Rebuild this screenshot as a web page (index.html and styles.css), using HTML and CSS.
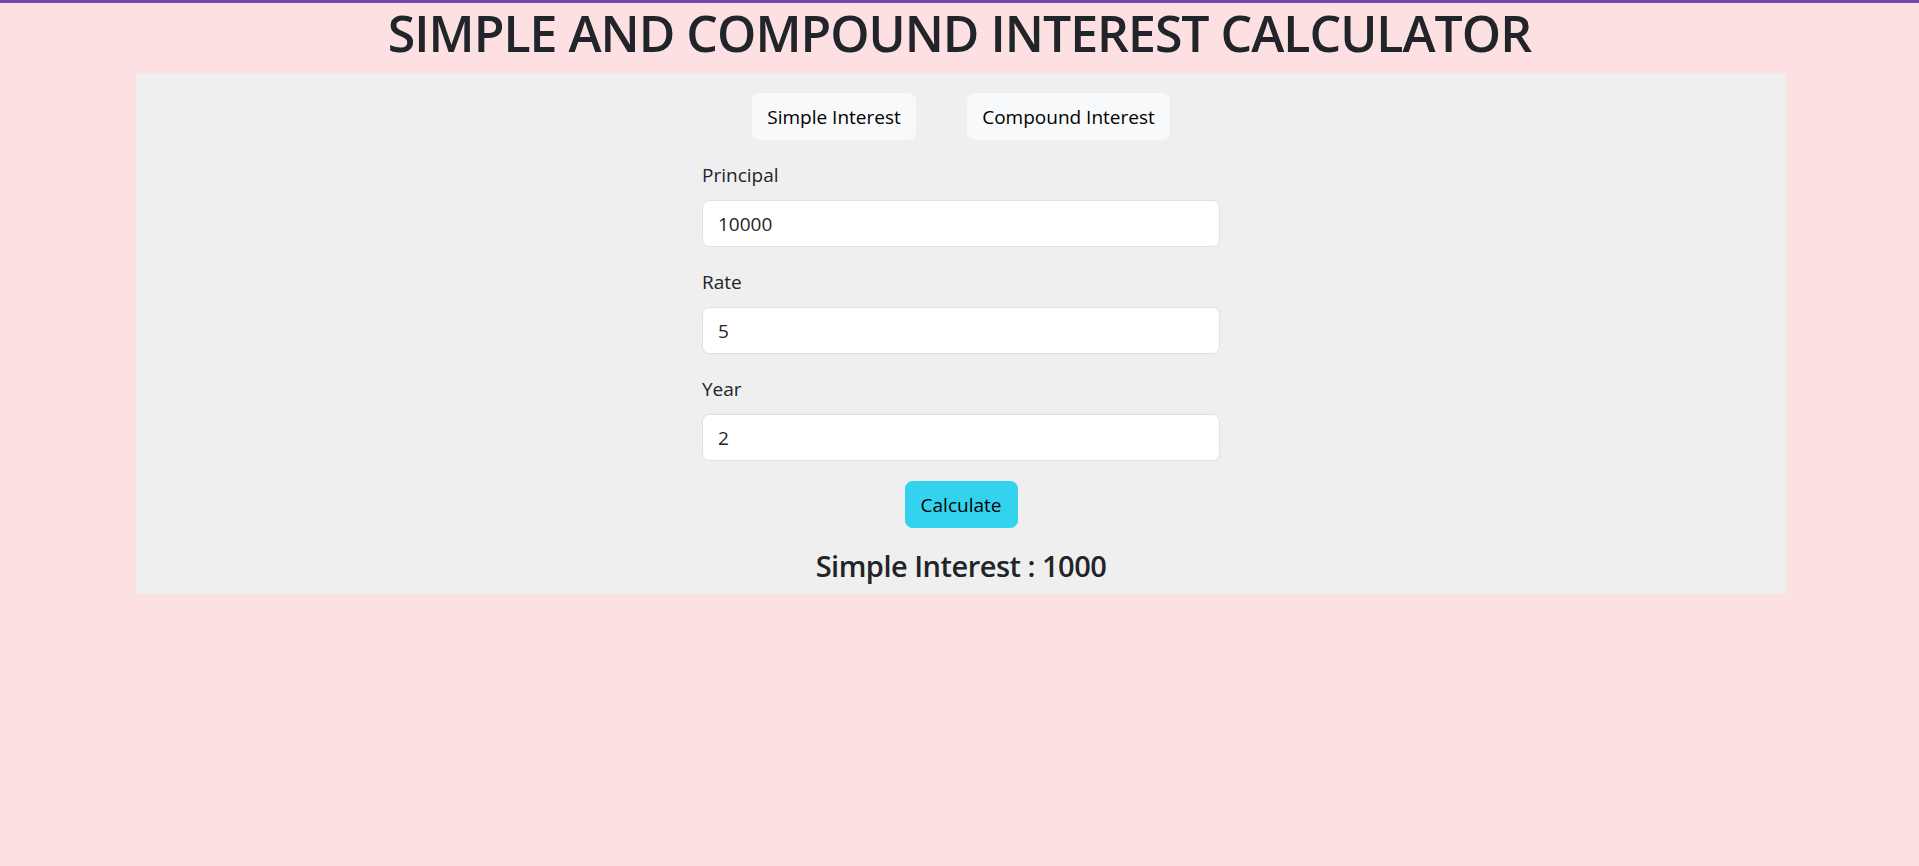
FILE: index.html
```html
<!DOCTYPE html>
<html lang="en">
<head>
<meta charset="utf-8">
<title>Simple and Compound Interest Calculator</title>
<link rel="stylesheet" href="styles.css">
</head>
<body>
<div class="topbar"></div>
<h1 class="title">SIMPLE AND COMPOUND INTEREST CALCULATOR</h1>
<main class="panel">
  <div class="tabs">
    <button class="tab tab-simple" type="button">Simple Interest</button>
    <button class="tab tab-compound" type="button">Compound Interest</button>
  </div>
  <form class="form">
    <div class="field">
      <label class="label" for="principal">Principal</label>
      <input class="input" id="principal" type="text" value="10000">
    </div>
    <div class="field">
      <label class="label" for="rate">Rate</label>
      <input class="input" id="rate" type="text" value="5">
    </div>
    <div class="field">
      <label class="label" for="year">Year</label>
      <input class="input" id="year" type="text" value="2">
    </div>
    <div class="actions">
      <button class="calc" type="button">Calculate</button>
    </div>
  </form>
  <h4 class="result">Simple Interest : 1000</h4>
</main>
</body>
</html>
```
FILE: styles.css
```css
html, body {
  margin: 0;
  padding: 0;
}
body {
  background: #fce0e2;
  color: #212529;
  font-family: "Open Sans", "Noto Sans", sans-serif;
  font-size: 19px;
}
.topbar {
  height: 3px;
  background: #6f47ad;
}
.title {
  margin: 0 0 10px;
  font-size: 50px;
  line-height: 60px;
  font-weight: 600;
  letter-spacing: -1px;
  text-align: center;
}
.panel {
  margin-left: 136px;
  width: 1650px;
  background: #efefef;
  padding-top: 20px;
  display: flex;
  flex-direction: column;
  align-items: center;
}
.tabs {
  display: flex;
  gap: 51px;
  margin-bottom: 20px;
}
.tab {
  height: 47px;
  padding: 0;
  font-family: inherit;
  font-size: 19px;
  color: #000;
  background: #f8f9fa;
  border: 1.25px solid #f8f9fa;
  border-radius: 7.5px;
}
.tab-simple { width: 164px; }
.tab-compound { width: 203px; }
.form {
  width: 518px;
}
.field {
  margin-bottom: 20px;
}
.label {
  display: block;
  line-height: 30px;
  margin-bottom: 10px;
}
.input {
  display: block;
  width: 100%;
  box-sizing: border-box;
  height: 47px;
  padding: 0 15px;
  font-family: inherit;
  font-size: 19px;
  color: #212529;
  background: #fff;
  border: 1.25px solid #dee2e6;
  border-radius: 7.5px;
}
.actions {
  display: flex;
  justify-content: center;
  margin-bottom: 20px;
}
.calc {
  width: 113px;
  height: 47px;
  padding: 0;
  font-family: inherit;
  font-size: 19px;
  color: #000;
  background: #33d3f0;
  border: 1.25px solid #33d3f0;
  border-radius: 7.5px;
}
.result {
  margin: 0 0 10px;
  font-size: 29px;
  line-height: 36px;
  font-weight: 600;
  letter-spacing: -0.5px;
  text-align: center;
}
```
